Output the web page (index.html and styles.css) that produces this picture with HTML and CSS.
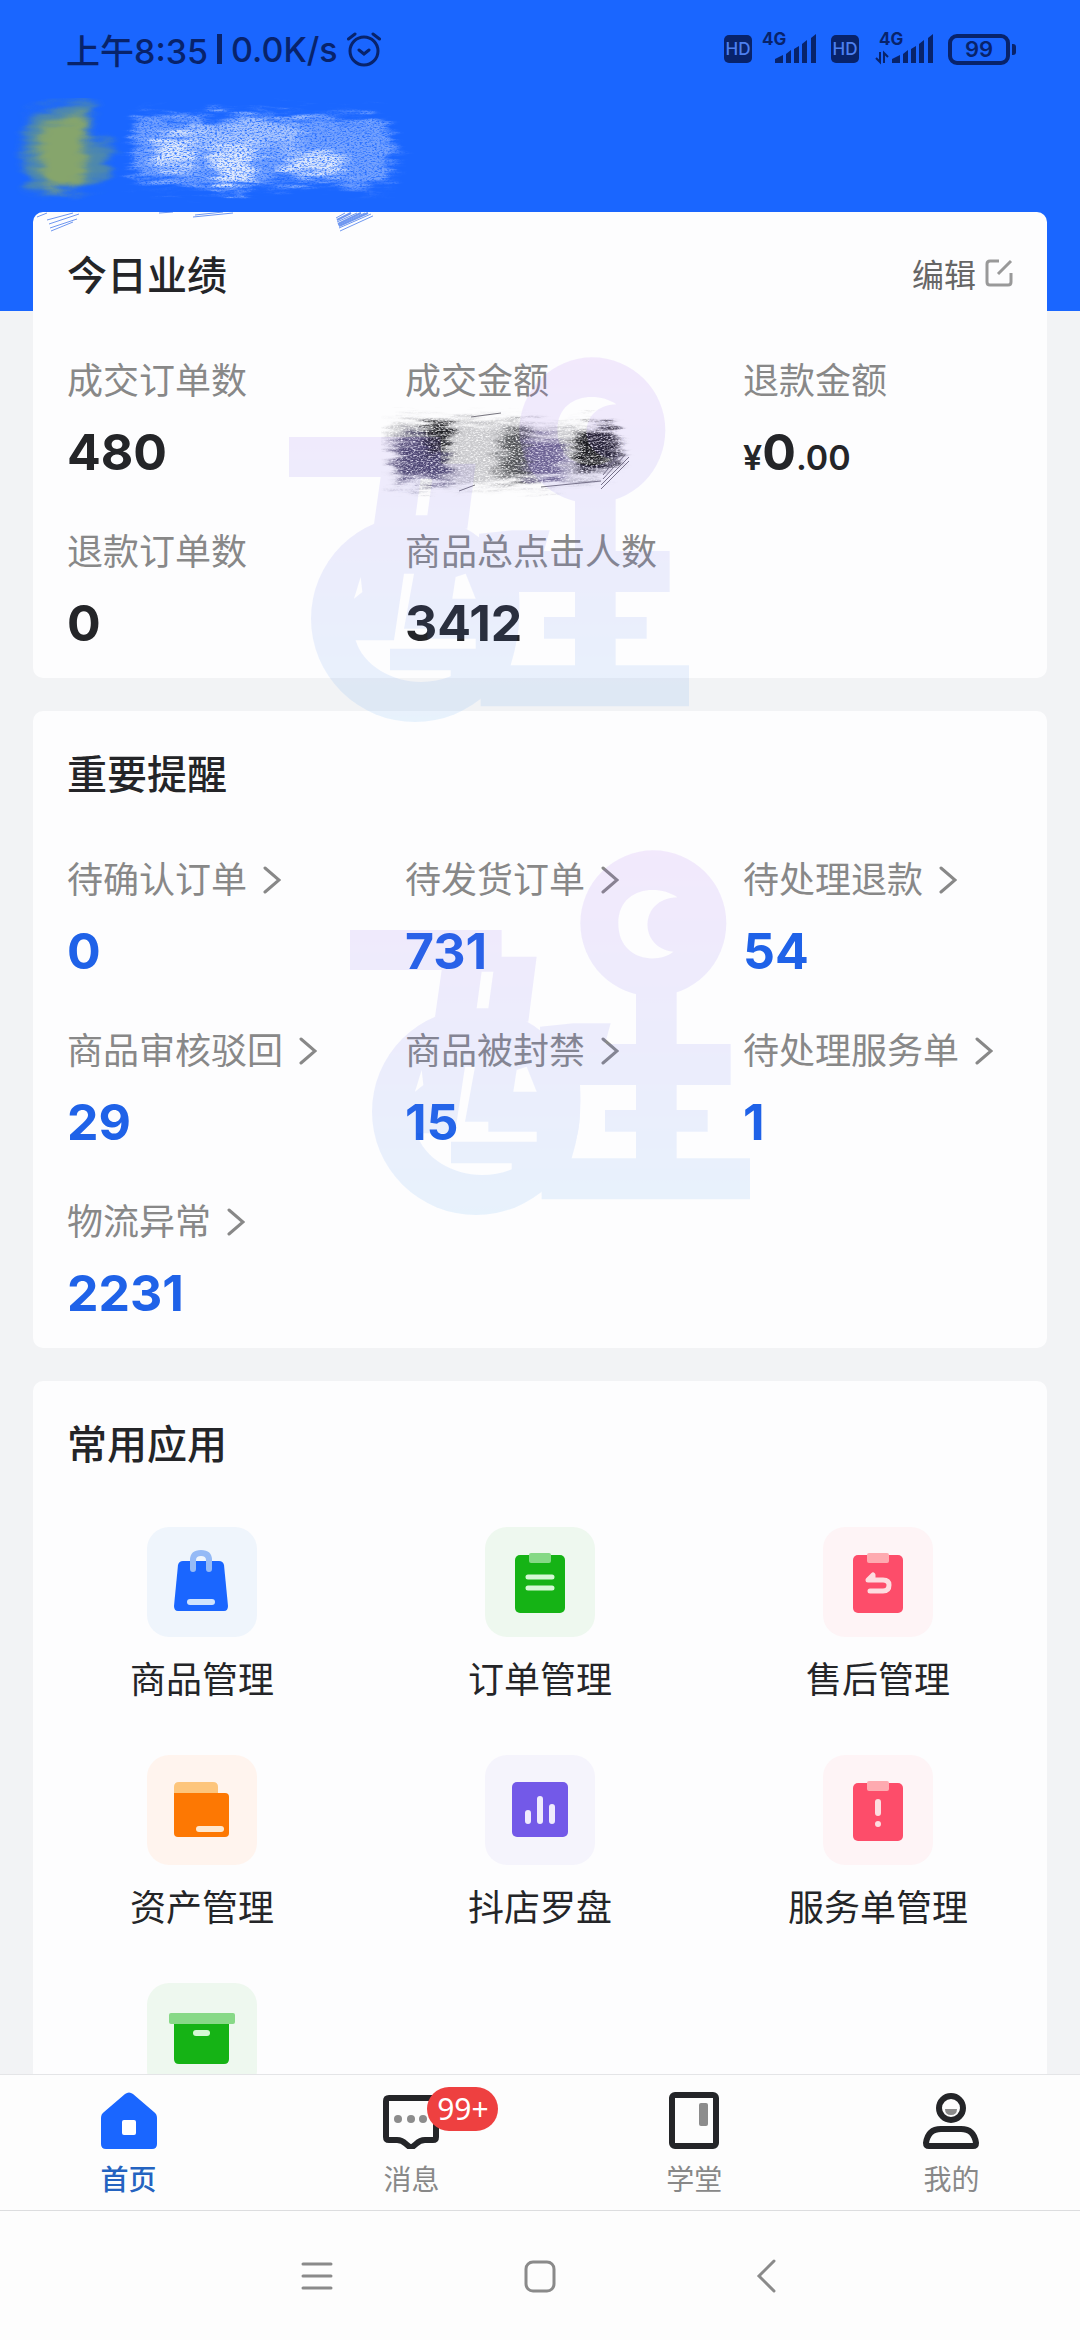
FILE: index.html
```html
<!DOCTYPE html>
<html lang="zh-CN">
<head>
<meta charset="utf-8">
<meta name="viewport" content="width=device-width">
<title>首页</title>
<link rel="stylesheet" href="styles.css">
</head>
<body>
<svg class="defs" aria-hidden="true">
  <defs>
    <linearGradient id="tint" x1="0" y1="0" x2="0" y2="1">
      <stop offset="0" stop-color="#a050f0"/>
      <stop offset="0.5" stop-color="#6a6cf0"/>
      <stop offset="1" stop-color="#3ca4f5"/>
    </linearGradient>
    <mask id="mark" maskUnits="userSpaceOnUse" x="0" y="0" width="1260" height="1200">
      <g fill="#fff">
        <path d="M30 270H485V350H590L565 545L285 530L305 390H30Z"/>
        <ellipse cx="408" cy="815" rx="312" ry="310"/>
        <circle cx="940" cy="250" r="219"/>
        <path d="M888 440H1010V612H1172V735H1010V810H1103V875H1010V955H1230V1078H605L600 560L700 550H812L795 612H888ZM720 735Q728 850 695 955H888V875H795V810H888V735Z" fill-rule="evenodd"/>
      </g>
      <g fill="#000">
        <path d="M425 395H460L445 505H410Z"/>
        <path d="M1012 172C950 130 835 145 835 250C835 360 950 375 1000 335C895 325 895 175 1012 172Z"/>
        <path d="M230 880C260 980 400 1035 515 988V970H333V905H590V875H445V845H375L405 680H375L345 880Z"/>
        <path d="M245 690L250 735L225 755Z"/>
        <path d="M530 690L560 680L590 755H520Z"/>
      </g>
    </mask>
    <symbol id="watermark" viewBox="0 0 1260 1200">
      <rect width="1260" height="1200" fill="url(#tint)" mask="url(#mark)"/>
    </symbol>
    <filter id="chalk" x="-20%" y="-40%" width="140%" height="180%">
      <feGaussianBlur in="SourceGraphic" stdDeviation="5" result="soft"/>
      <feTurbulence type="fractalNoise" baseFrequency="0.03 0.2" numOctaves="3" seed="4" result="streak"/>
      <feDisplacementMap in="soft" in2="streak" scale="30" xChannelSelector="R" yChannelSelector="G" result="torn"/>
      <feTurbulence type="fractalNoise" baseFrequency="0.4 0.8" numOctaves="2" seed="9" result="dust"/>
      <feColorMatrix in="dust" type="matrix" values="0 0 0 0 0  0 0 0 0 0  0 0 0 0 0  2.5 0 0 0 -0.4" result="grain"/>
      <feComposite in="torn" in2="grain" operator="in"/>
    </filter>
    <filter id="smear" x="-30%" y="-30%" width="160%" height="160%">
      <feGaussianBlur in="SourceGraphic" stdDeviation="5" result="soft"/>
      <feTurbulence type="fractalNoise" baseFrequency="0.03 0.12" numOctaves="2" seed="2" result="streak"/>
      <feDisplacementMap in="soft" in2="streak" scale="18" xChannelSelector="R" yChannelSelector="G"/>
    </filter>
    <symbol id="chevron" viewBox="0 0 18 28">
      <path d="M2 2L16 14L2 26" fill="none" stroke="currentColor" stroke-width="3" stroke-linecap="round"/>
    </symbol>
    <symbol id="bars" viewBox="0 0 41 29">
      <path d="M0 29V25L8 21V29ZM11 29V20L16 16V29ZM19 29V15L24 12V29ZM27 29V10L32 6V29ZM36 29V4L41 0V29Z" fill="currentColor"/>
    </symbol>
  </defs>
</svg>

<div class="app">
  <main class="scroll">
    <header class="hero">
      <div class="status">
        <div class="status-left">
          <span>上午8:35</span><span class="bar"></span><span>0.0K/s</span>
          <svg width="34" height="36" viewBox="0 0 34 36" fill="none" stroke="currentColor" stroke-width="3" stroke-linecap="round">
            <circle cx="17" cy="20" r="14"/><path d="M12 19L17 23L22 19M1.500 8L8 3M32.500 8L26 3"/>
          </svg>
        </div>
        <div class="status-right">
          <div class="sim">
            <span class="hd">HD</span>
            <svg width="54" height="50" viewBox="0 -8 54 50"><text x="0" y="13" class="net">4G</text><use href="#bars" x="13" y="2" width="41" height="29"/></svg>
          </div>
          <div class="sim">
            <span class="hd">HD</span>
            <svg width="64" height="50" viewBox="0 -8 64 50"><text x="10" y="13" class="net">4G</text><use href="#bars" x="23" y="2" width="41" height="29"/><path d="M11 20V30L7 26M15 31V21L19 25" fill="none" stroke="currentColor" stroke-width="2"/></svg>
          </div>
          <div class="battery"><span>99</span></div>
        </div>
      </div>
      <svg class="shop" width="440" height="114" viewBox="0 98 440 114" aria-hidden="true">
        <g filter="url(#smear)">
          <path d="M36 112L92 98L90 140L110 146L106 178L76 190L28 188L24 132Z" fill="#6f9f74" opacity="0.600"/>
          <path d="M46 122L86 116L84 186L48 186L36 150Z" fill="#86a56c"/>
        </g>
        <g filter="url(#chalk)" fill="#dfe9fc">
          <path d="M134 118L290 116L380 118L396 150L388 184L365 188L340 180L190 186L134 180Z" opacity="0.450"/>
          <path d="M152 140L192 132L196 170L158 168Z"/>
          <path d="M206 148L260 144L250 188L222 188Z"/>
          <path d="M280 156L340 152L342 176L288 174Z"/>
          <path d="M190 122L300 120L298 148L196 148Z" opacity="0.500"/>
        </g>
      </svg>
    </header>

    <div class="cards">
      <section class="card">
        <svg class="scraps" width="340" height="22" viewBox="0 0 340 22" fill="none" stroke="#6f97f0" stroke-width="1" aria-hidden="true">
          <path d="M4 5L14 1M14 8L40 1M16 12L46 2M17 16L44 7M18 19L40 10M126 1L140 0M160 5L200 1M162 3L190 0"/>
          <path d="M303 6L312 1M304 10L324 1M305 13L332 1M306 16L338 2M307 19L342 3"/>
          <path d="M304 8L318 1M305 12L328 1M306 14L335 1" stroke-width="2"/>
        </svg>
        <div class="card-head">
          <h2>今日业绩</h2>
          <button class="edit" type="button">编辑
            <svg width="28" height="28" viewBox="0 0 28 28" fill="none" stroke="#999" stroke-width="3"><path d="M14 2H5Q2 2 2 5V23Q2 26 5 26H23Q26 26 26 23V14M13 15L26 2"/></svg>
          </button>
        </div>
        <dl class="stats">
          <div class="stat"><dt>成交订单数</dt><dd>480</dd></div>
          <div class="stat"><dt>成交金额</dt><dd>
            <svg class="redacted" width="260" height="90" viewBox="380 408 260 90" aria-hidden="true">
              <g filter="url(#chalk)">
                <path d="M392 422L480 420L560 428L612 432L606 476L540 486L392 484Z" fill="#6a6a72" opacity="0.350"/>
                <path d="M396 438L444 432L448 482L398 484Z" fill="#4b4668"/>
                <path d="M424 426L446 424L448 455L426 456Z" fill="#222226"/>
                <path d="M502 432L530 430L528 480L498 478Z" fill="#55565a"/>
                <path d="M524 440L564 442L562 482L524 480Z" fill="#6a6488"/>
                <path d="M576 430L614 428L618 468L574 468Z" fill="#1f1f24"/>
              </g>
              <path d="M600 490L628 462M600 486L628 458M602 480L624 456M602 476L620 454M606 470L616 458M540 488L600 482M470 418L500 414M458 492L474 486" stroke="#77757f" stroke-width="1"/>
            </svg></dd></div>
          <div class="stat"><dt>退款金额</dt><dd><small>¥</small>0<small>.00</small></dd></div>
          <div class="stat"><dt>退款订单数</dt><dd>0</dd></div>
          <div class="stat"><dt>商品总点击人数</dt><dd>3412</dd></div>
        </dl>
      </section>

      <section class="card">
        <div class="card-head"><h2>重要提醒</h2></div>
        <div class="stats links">
          <a class="stat" href="#"><span class="label">待确认订单<svg width="18" height="28"><use href="#chevron"/></svg></span><b>0</b></a>
          <a class="stat" href="#"><span class="label">待发货订单<svg width="18" height="28"><use href="#chevron"/></svg></span><b>731</b></a>
          <a class="stat" href="#"><span class="label">待处理退款<svg width="18" height="28"><use href="#chevron"/></svg></span><b>54</b></a>
          <a class="stat" href="#"><span class="label">商品审核驳回<svg width="18" height="28"><use href="#chevron"/></svg></span><b>29</b></a>
          <a class="stat" href="#"><span class="label">商品被封禁<svg width="18" height="28"><use href="#chevron"/></svg></span><b>15</b></a>
          <a class="stat" href="#"><span class="label">待处理服务单<svg width="18" height="28"><use href="#chevron"/></svg></span><b>1</b></a>
          <a class="stat" href="#"><span class="label">物流异常<svg width="18" height="28"><use href="#chevron"/></svg></span><b>2231</b></a>
        </div>
      </section>

      <section class="card">
        <div class="card-head"><h2>常用应用</h2></div>
        <nav class="tools">
          <a class="tool" href="#">
            <svg class="tile blue" viewBox="0 0 110 110">
              <path d="M36 34H72Q76 34 77 38L81 79Q81 84 77 84H31Q27 84 27 79L31 38Q32 34 36 34Z" fill="#1a66ff"/>
              <path d="M46 42V33Q46 26 54 26Q62 26 62 33V42" fill="none" stroke="#95baf6" stroke-width="6" stroke-linecap="round"/>
              <rect x="40" y="72" width="28" height="6" rx="3" fill="#cfe3fd"/>
            </svg>商品管理</a>
          <a class="tool" href="#">
            <svg class="tile green" viewBox="0 0 110 110">
              <rect x="30" y="28" width="50" height="58" rx="5" fill="#15b315"/><rect x="44" y="26" width="22" height="10" rx="2" fill="#85d985"/>
              <path d="M43 50H67M43 61H67" stroke="#d5f8d5" stroke-width="5" stroke-linecap="round"/>
            </svg>订单管理</a>
          <a class="tool" href="#">
            <svg class="tile pink" viewBox="0 0 110 110">
              <rect x="30" y="28" width="50" height="58" rx="5" fill="#fd4d6a"/><rect x="44" y="26" width="22" height="10" rx="2" fill="#feaab0"/>
              <path d="M47 64H60Q66 64 66 58Q66 53 60 53H45L50 48V53" fill="none" stroke="#fddde0" stroke-width="5" stroke-linecap="round" stroke-linejoin="round"/>
            </svg>售后管理</a>
          <a class="tool" href="#">
            <svg class="tile orange" viewBox="0 0 110 110">
              <path d="M27 44V32Q27 27 32 27H66Q71 27 71 32V44Z" fill="#fdc57c"/>
              <path d="M27 38H78Q82 38 82 42V78Q82 82 78 82H31Q27 82 27 78Z" fill="#fd7803"/>
              <rect x="49" y="71" width="28" height="6" rx="3" fill="#fee8cf"/>
            </svg>资产管理</a>
          <a class="tool" href="#">
            <svg class="tile purple" viewBox="0 0 110 110">
              <rect x="27" y="27" width="56" height="55" rx="5" fill="#7359e8"/>
              <path d="M43 58V66M55 44V66M67 52V66" stroke="#efebfd" stroke-width="6" stroke-linecap="round"/>
            </svg>抖店罗盘</a>
          <a class="tool" href="#">
            <svg class="tile pink" viewBox="0 0 110 110">
              <rect x="30" y="28" width="50" height="58" rx="5" fill="#fd4d6a"/><rect x="44" y="26" width="22" height="10" rx="2" fill="#feaab0"/>
              <path d="M55 47V58M55 69V69" stroke="#fddde0" stroke-width="6" stroke-linecap="round"/>
            </svg>服务单管理</a>
          <a class="tool" href="#">
            <svg class="tile green" viewBox="0 0 110 110">
              <path d="M27 38H82V76Q82 81 77 81H32Q27 81 27 76Z" fill="#15b315"/><rect x="22" y="30" width="66" height="11" rx="2" fill="#87d987"/>
              <rect x="46" y="47" width="17" height="6" rx="3" fill="#d5f8d5"/>
            </svg></a>
        </nav>
      </section>
    </div>

    <svg class="watermark first" width="420" height="400" aria-hidden="true"><use href="#watermark"/></svg>
    <svg class="watermark second" width="420" height="400" aria-hidden="true"><use href="#watermark"/></svg>
  </main>

  <nav class="tabs">
    <a class="tab active" href="#">
      <svg width="56" height="57" viewBox="0 0 56 57"><path d="M24 2Q28 -1 32 2L53 20Q56 22 56 26V52Q56 57 51 57H5Q0 57 0 52V26Q0 22 3 20Z" fill="#1a66ff"/><rect x="21" y="28" width="14" height="15" rx="2" fill="#fff"/></svg>
      首页</a>
    <a class="tab" href="#">
      <span class="tab-icon">
        <svg width="56" height="57" viewBox="0 0 56 57"><path d="M6 6H50Q53 6 53 9V45Q53 48 50 48H42Q37 48 33 52L28 56L23 52Q19 48 14 48H6Q3 48 3 45V9Q3 6 6 6Z" fill="none" stroke="#242528" stroke-width="6" stroke-linejoin="round"/><g fill="#8c8c8c"><circle cx="15" cy="27" r="4"/><circle cx="28" cy="27" r="4"/><circle cx="40" cy="27" r="4"/></g></svg>
        <span class="badge">99+</span>
      </span>
      消息</a>
    <a class="tab" href="#">
      <svg width="56" height="57" viewBox="0 0 56 57"><rect x="6" y="3" width="44" height="51" rx="3" fill="none" stroke="#242528" stroke-width="6"/><rect x="33" y="11" width="9" height="23" rx="2" fill="#8c8c8c"/></svg>
      学堂</a>
    <a class="tab" href="#">
      <svg width="56" height="57" viewBox="0 0 56 57" fill="none" stroke="#242528" stroke-width="6"><circle cx="28" cy="16" r="12"/><path d="M6 54Q3 54 3 51Q5 37 18 37H38Q51 37 53 51Q53 54 50 54Z" stroke-linejoin="round"/><path d="M22 17H34Q34 23 28 23Q22 23 22 17Z" fill="#8c8c8c" stroke="none"/></svg>
      我的</a>
  </nav>

  <div class="sysnav">
    <button type="button" aria-label="最近任务"><svg width="32" height="36" viewBox="0 0 32 36"><path d="M2 6H30M2 18H30M2 30H30"/></svg></button>
    <button type="button" aria-label="主屏幕"><svg width="32" height="36" viewBox="0 0 32 36"><rect x="2" y="4" width="28" height="29" rx="7"/></svg></button>
    <button type="button" aria-label="返回"><svg width="32" height="36" viewBox="0 0 32 36"><path d="M27 3L12 18L27 33"/></svg></button>
  </div>
</div>
</body>
</html>
```

FILE: styles.css
```css
* { box-sizing: border-box; }

body {
  margin: 0;
  font-family: Inter, "Noto Sans CJK SC", sans-serif;
  color: #242528;
}

a { color: inherit; text-decoration: none; }
button { font: inherit; border: 0; padding: 0; background: none; }
svg { display: block; flex: none; }

.defs { position: absolute; width: 0; height: 0; }

.app {
  display: flex;
  flex-direction: column;
  height: 100vh;
  background: #fdfdfd;
}

.scroll {
  position: relative;
  flex: 1;
  min-height: 0;
  overflow-y: auto;
  scrollbar-width: none;
  background: #f2f3f5;
}

/* Header */
.hero { background: #1a66ff; padding-bottom: 99px; }

.status {
  display: flex;
  justify-content: space-between;
  align-items: center;
  height: 98px;
  padding: 0 64px 0 66px;
  color: #08236b;
  font-size: 34px;
  font-weight: 500;
}
.status-left { display: flex; align-items: center; gap: 9px; }
.bar { width: 5px; height: 30px; background: currentColor; }
.status-right { display: flex; align-items: center; gap: 15px; }
.sim { display: flex; align-items: center; gap: 10px; }
.hd {
  width: 28px;
  border-radius: 5px;
  background: #08236b;
  color: #4d80f0;
  font-size: 17px;
  line-height: 28px;
  text-align: center;
}
.net { font-size: 17px; font-weight: 700; fill: currentColor; }
.battery {
  position: relative;
  width: 62px;
  height: 31px;
  margin-right: 6px;
  border: 4px solid currentColor;
  border-radius: 9px;
  font-size: 22px;
  font-weight: 600;
  line-height: 23px;
  text-align: center;
}
.battery::after {
  content: "";
  position: absolute;
  right: -10px;
  top: 6px;
  width: 4px;
  height: 11px;
  border-radius: 0 3px 3px 0;
  background: currentColor;
}

/* Cards */
.cards {
  position: relative;
  display: flex;
  flex-direction: column;
  gap: 33px;
  margin-top: -99px;
  padding: 0 33px 33px;
}
.card {
  position: relative;
  padding-bottom: 20px;
  border-radius: 10px;
  background: #fdfdfe;
}
.scraps { position: absolute; left: 0; top: 0; }
.card-head {
  display: flex;
  justify-content: space-between;
  align-items: center;
  height: 126px;
  padding: 0 34px 5px;
}
.card-head h2 { margin: 0; font-size: 40px; font-weight: 500; }
.edit {
  display: flex;
  align-items: center;
  gap: 9px;
  color: #666;
  font-size: 32px;
}

.stats {
  display: grid;
  grid-template-columns: repeat(3, 1fr);
  row-gap: 40px;
  margin: 0;
  padding-top: 18px;
}
.stat { display: block; padding-left: 34px; }
.stat dt, .label {
  display: flex;
  align-items: center;
  gap: 16px;
  color: #888;
  font-size: 36px;
  line-height: 50px;
  white-space: nowrap;
}
.stat dd, .stat b {
  display: block;
  height: 70px;
  margin: 11px 0 0;
  font-size: 50px;
  font-weight: 700;
  line-height: 70px;
  white-space: nowrap;
}
.stat small { font-size: 34px; font-weight: 600; }
.links b { color: #1f62e8; }
.redacted { margin: -10px 0 0 -24px; }

/* App shortcuts */
.tools {
  display: grid;
  grid-template-columns: repeat(3, 1fr);
  row-gap: 50px;
  padding-top: 20px;
}
.tool {
  display: flex;
  flex-direction: column;
  align-items: center;
  gap: 18px;
  font-size: 36px;
  line-height: 50px;
}
.tile { width: 110px; height: 110px; border-radius: 22px; }
.blue { background: #eff5fc; }
.green { background: #eef8ef; }
.pink { background: #fef4f6; }
.orange { background: #fff4ee; }
.purple { background: #f5f4fc; }

/* Watermark laid over the cards */
.watermark { position: absolute; opacity: 0.11; pointer-events: none; }
.first { left: 279px; top: 347px; }
.second { left: 340px; top: 840px; }

/* Bottom tabs */
.tabs {
  display: grid;
  grid-template-columns: 5fr 6fr 5fr 5fr;
  border-top: 1px solid #e4e5e7;
  border-bottom: 1px solid #dcdddf;
}
.tab {
  display: flex;
  flex-direction: column;
  align-items: center;
  gap: 11px;
  padding: 17px 0 10px;
  color: #888;
  font-size: 28px;
  line-height: 40px;
}
.active { color: #2463c0; font-weight: 500; }
.tab-icon { position: relative; }
.badge {
  position: absolute;
  left: 44px;
  top: -5px;
  width: 71px;
  border-radius: 22px;
  background: #ee4040;
  color: #fff;
  font-family: "Noto Sans", sans-serif;
  font-size: 30px;
  line-height: 44px;
  text-align: center;
}

.sysnav {
  display: flex;
  justify-content: center;
  align-items: center;
  gap: 191px;
  height: 129px;
}
.sysnav svg { fill: none; stroke: #8a8a8a; stroke-width: 3; stroke-linecap: round; }
```
